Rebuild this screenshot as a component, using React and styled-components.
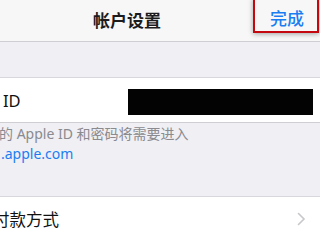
import React from 'react'
import styled, { createGlobalStyle } from 'styled-components'

const Global = createGlobalStyle`
  html, body {
    margin: 0;
    padding: 0;
    background: #efeff4;
  }
  body {
    font-family: "Noto Sans", "Noto Sans CJK SC", sans-serif;
    -webkit-font-smoothing: antialiased;
  }
`

const Page = styled.div`
  width: 320px;
  height: 240px;
  overflow: hidden;
  background: #efeff4;
`

const NavBar = styled.div`
  height: 41px;
  display: flex;
  align-items: flex-start;
  justify-content: space-between;
  background: #f7f7f8;
  border-bottom: 1px solid #cfcfd3;
`

const Title = styled.div`
  margin-left: 93px;
  height: 41px;
  display: flex;
  align-items: center;
  font-size: 17px;
  font-weight: 600;
  color: #1c1c1e;
  padding-bottom: 2px;
  box-sizing: border-box;
`

const DoneButton = styled.div`
  margin-top: -2px;
  margin-right: 1px;
  width: 66px;
  height: 35px;
  box-sizing: border-box;
  border: 2px solid #c5070f;
  box-shadow: 0 1px 5px rgba(0, 0, 0, 0.35);
  display: flex;
  align-items: center;
  justify-content: center;
  padding-top: 4px;
  padding-left: 2px;
  font-size: 17px;
  color: #1a7ef2;
  font-weight: 500;
`

const Spacer = styled.div`
  height: ${p => p.h}px;
`

const Cell = styled.div`
  height: ${p => p.h}px;
  display: flex;
  align-items: center;
  justify-content: space-between;
  background: #fff;
  border-top: 1px solid #d8d8dc;
  border-bottom: 1px solid #cfcfd3;
  box-sizing: border-box;
  padding-left: ${p => p.indent}px;
  padding-right: ${p => p.right}px;
`

const Label = styled.span`
  font-size: 16.5px;
  color: #111;
  white-space: nowrap;
`

const Redacted = styled.div`
  width: 185px;
  height: 26px;
  margin-top: 4px;
  background: #030303;
`

const Footer = styled.div`
  padding: 1px 0 0 0;
  font-size: 14px;
  line-height: 20px;
  color: #8a8a8f;
  white-space: nowrap;
`

const Link = styled.div`
  color: #1a7ef2;
  margin-left: 1px;
`

const Chevron = () => (
  <svg width="9" height="14" viewBox="0 0 9 14">
    <path d="M1.5 1.5 L7 7 L1.5 12.5" fill="none" stroke="#c7c7cc" strokeWidth="1.6" strokeLinecap="round" />
  </svg>
)

export default function App() {
  return (
    <Page>
      <Global />
      <NavBar>
        <Title>帐户设置</Title>
        <DoneButton>完成</DoneButton>
      </NavBar>
      <Spacer h={35} />
      <Cell h={46} indent={3} right={7}>
        <Label>ID</Label>
        <Redacted />
      </Cell>
      <Footer>
        <div style={{ marginLeft: -1 }}>的 Apple ID 和密码将需要进入</div>
        <Link>.apple.com</Link>
      </Footer>
      <Spacer h={32} />
      <Cell h={46} indent={0} right={14}>
        <Label style={{ marginLeft: -7 }}>付款方式</Label>
        <Chevron />
      </Cell>
    </Page>
  )
}
